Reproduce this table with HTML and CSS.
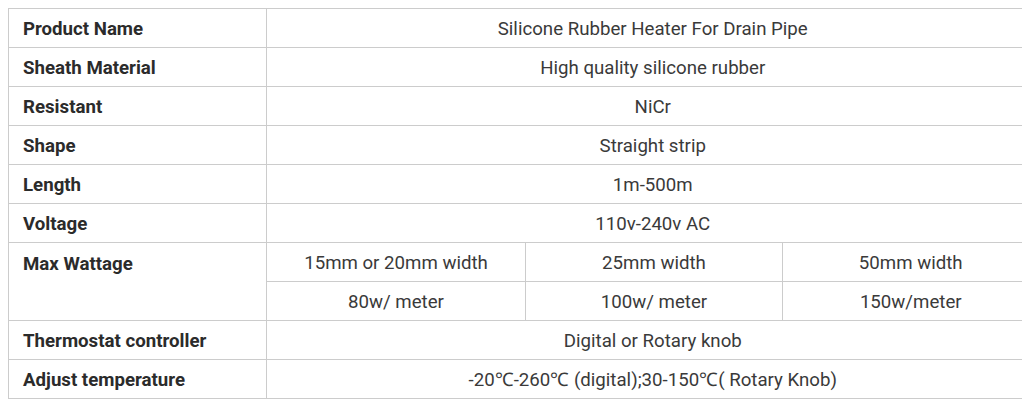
FILE: index.html
```html
<!DOCTYPE html>
<html>
<head>
<meta charset="utf-8">
<link rel="stylesheet" href="styles.css">
</head>
<body>
<table class="spec">
  <colgroup>
    <col class="c-label">
    <col class="c-a">
    <col class="c-b">
    <col class="c-c">
  </colgroup>
  <tbody>
    <tr><th>Product Name</th><td colspan="3">Silicone Rubber Heater For Drain Pipe</td></tr>
    <tr><th>Sheath Material</th><td colspan="3">High quality silicone rubber</td></tr>
    <tr><th>Resistant</th><td colspan="3">NiCr</td></tr>
    <tr><th>Shape</th><td colspan="3">Straight strip</td></tr>
    <tr><th>Length</th><td colspan="3">1m-500m</td></tr>
    <tr><th>Voltage</th><td colspan="3">110v-240v AC</td></tr>
    <tr><th rowspan="2" class="top">Max Wattage</th><td>15mm or 20mm width</td><td>25mm width</td><td>50mm width</td></tr>
    <tr><td>80w/ meter</td><td>100w/ meter</td><td>150w/meter</td></tr>
    <tr><th>Thermostat controller</th><td colspan="3">Digital or Rotary knob</td></tr>
    <tr><th>Adjust temperature</th><td colspan="3">-20℃-260℃ (digital);30-150℃( Rotary Knob)</td></tr>
  </tbody>
</table>
</body>
</html>
```

FILE: styles.css
```css
html, body {
  margin: 0;
  padding: 0;
  background: #ffffff;
}
body {
  padding: 8px;
  font-family: Roboto, "Liberation Sans", Arial, sans-serif;
  color: #333333;
}
.spec {
  border-collapse: collapse;
  table-layout: fixed;
  width: 1013px;
}
.c-label { width: 258px; }
.c-a { width: 259px; }
.c-b { width: 257px; }
.c-c { width: 239px; }
.spec th, .spec td {
  border: 1px solid #cccccc;
  height: 39px;
  padding: 2px 14px 0;
  font-size: 14pt;
  line-height: 20px;
  box-sizing: border-box;
}
.spec th {
  text-align: left;
  font-weight: 700;
  color: #2b2b2b;
}
.spec th.top {
  vertical-align: top;
  padding-top: 11px;
}
.spec td {
  text-align: center;
  font-weight: 400;
  color: #3a3a3a;
}
.spec tr > td:last-child {
  border-right: none;
  padding-left: 31px;
}
```
